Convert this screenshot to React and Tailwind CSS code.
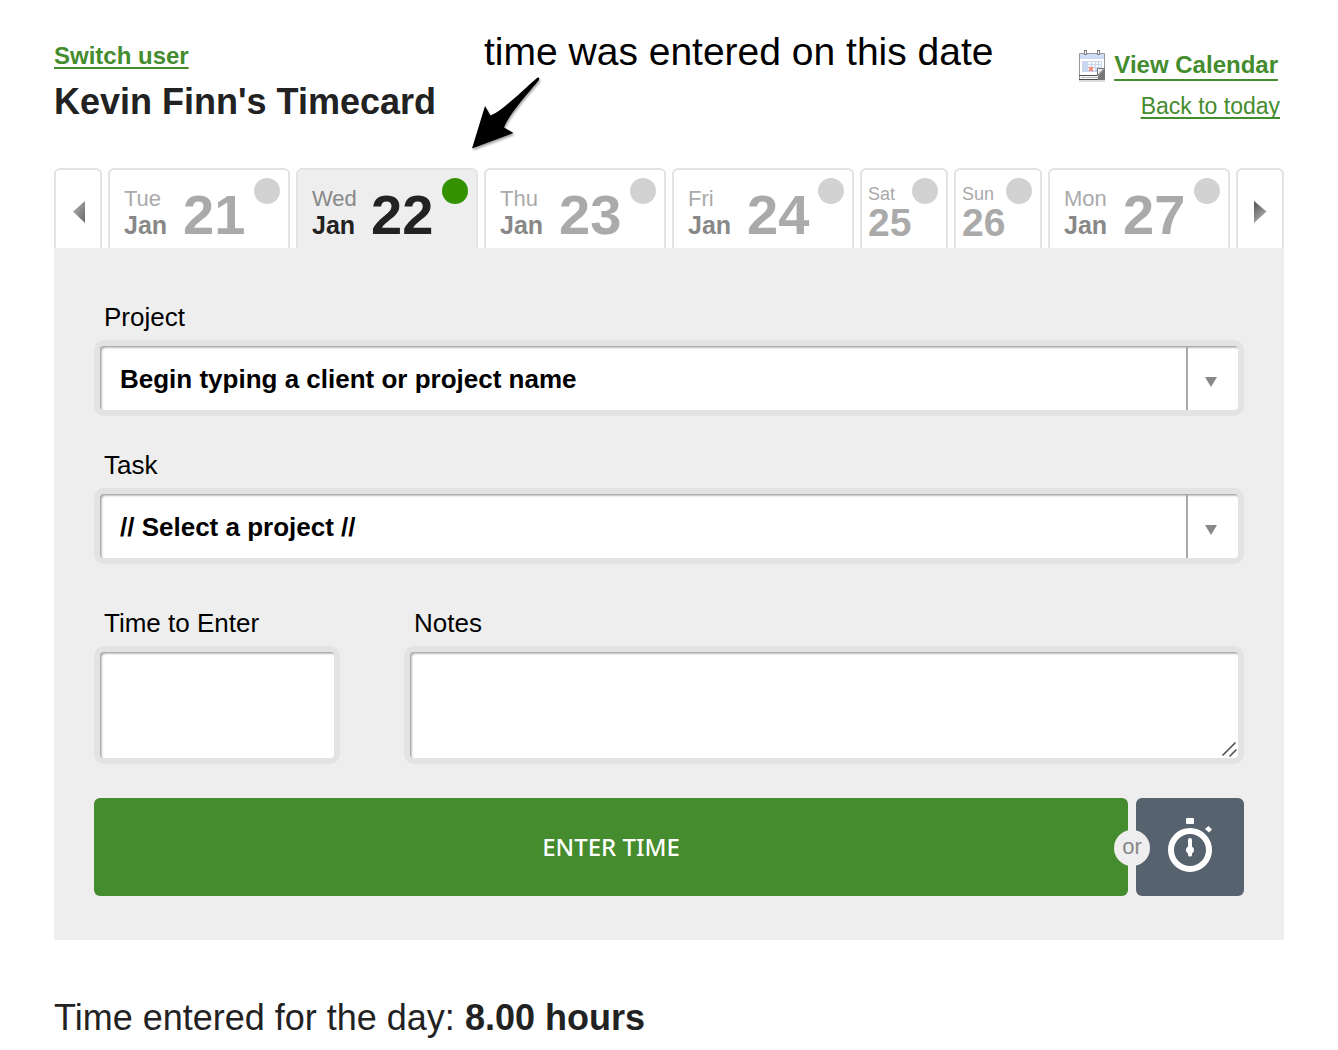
const days = [
  { id: 'tue', name: 'Tue', month: 'Jan', date: '21' },
  { id: 'wed', name: 'Wed', month: 'Jan', date: '22', active: true },
  { id: 'thu', name: 'Thu', month: 'Jan', date: '23' },
  { id: 'fri', name: 'Fri', month: 'Jan', date: '24' },
  { id: 'sat', name: 'Sat', date: '25', weekend: true },
  { id: 'sun', name: 'Sun', date: '26', weekend: true },
  { id: 'mon', name: 'Mon', month: 'Jan', date: '27' },
];

const labelText = 'mb-1.5 block pl-2.5 leading-[34px]';
const fieldBox =
  'relative flex rounded-[10px] border-6 border-[#e3e3e3] bg-[#e3e3e3]';
const fieldInner =
  'flex w-full rounded-[4px] bg-white shadow-[inset_1px_1px_1px_#aaa,inset_2px_2px_2px_#c4c4c4]';

function CalendarIcon() {
  return (
    <svg width="28" height="32" viewBox="0 0 28 32" aria-hidden="true">
      <rect x="1" y="30" width="26" height="2" fill="#dcdcdc" />
      <rect x="1" y="3" width="26" height="27" fill="#fff" />
      <path d="M1.500 30V3.500h25V30" fill="none" stroke="#9a9a9a" />
      <rect x="2" y="4" width="24" height="5" fill="#cfdcf5" />
      <path d="M1 25.500h19M1 29.500h26" stroke="#4c4c4c" />
      <path d="M3 27.500h18" stroke="#b5b5b5" />
      <rect x="4" y="11" width="20" height="11" fill="#c9d6ef" />
      <path
        d="M10 12h3v2h-3zM14 12h3v2h-3zM18 12h2v2h-2zM21 12h2v2h-2zM10 15h3v2h-3zM14 15h3v2h-3zM18 15h2v2h-2zM21 15h2v2h-2zM10 18h3v3h-3zM14 18h3v3h-3z"
        fill="#f7f9ff"
      />
      <path d="M11 17l4 4M15 17l-4 4" stroke="#f0765c" strokeWidth="1.500" />
      <path d="M20 26l7-8v12h-7z" fill="#777" />
      <path d="M19.500 25.500v-7h6.500z" fill="#eee" stroke="#777" />
      <rect x="6.500" y="0.500" width="2" height="4" fill="#fff" stroke="#7d7d7d" />
      <rect x="19.500" y="0.500" width="2" height="4" fill="#fff" stroke="#7d7d7d" />
    </svg>
  );
}

function ArrowAnnotation() {
  return (
    <svg
      className="absolute top-10 -left-3 drop-shadow-[1px_2px_1px_rgba(0,0,0,0.35)]"
      width="70"
      height="76"
      viewBox="0 0 70 76"
      aria-hidden="true"
    >
      <path d="M65.500 1.500Q68 1 67 4C58 15 37 38 32 51.500L41.500 57L0 72.500L13 30L18.500 39.500C32 34 54 11 65.500 1.500Z" />
    </svg>
  );
}

function Triangle({ direction }) {
  const left = direction === 'left';
  return (
    <svg width="13" height="24" viewBox="0 0 13 24" aria-hidden="true">
      <defs>
        <linearGradient id={`shade-${direction}`} x1="0" y1="0" x2={left ? '1' : '0.5'} y2="1">
          <stop offset="0" stopColor={left ? '#b8b8b8' : '#4d4d4d'} />
          <stop offset="1" stopColor={left ? '#666' : '#b0b0b0'} />
        </linearGradient>
      </defs>
      <path
        d={left ? 'M13 1v22L1 11.500z' : 'M0 1v22L12.500 11.500z'}
        fill={`url(#shade-${direction})`}
      />
    </svg>
  );
}

function StopwatchIcon() {
  return (
    <svg className="mb-1" width="46" height="56" viewBox="0 0 46 56" fill="#fff" aria-hidden="true">
      <rect x="19" y="1" width="8" height="6" rx="1" />
      <circle cx="23" cy="33" r="19" fill="none" stroke="#fff" strokeWidth="6" />
      <path d="M21 22.500a2 1.500 0 0 1 4 0V29.500a4 4 0 0 1 0 7V38a2 1.500 0 0 1-4 0V36.500a4 4 0 0 1 0-7z" />
      <path d="M41.500 9l3.500 3.500-3 3-4-3.500z" />
    </svg>
  );
}

function DayTab({ day }) {
  const dayColor = day.active ? 'text-[#888]' : 'text-[#aaa]';
  return (
    <button
      type="button"
      aria-pressed={Boolean(day.active)}
      className={`relative flex h-20 rounded-t-md border-2 border-b-0 border-[#e3e3e3] text-left ${
        day.active ? 'bg-[#eee]' : 'bg-white'
      } ${day.weekend ? 'flex-col px-1.5 pt-3' : 'items-start gap-[15px] pt-[17px] pl-3.5'}`}
    >
      {day.weekend ? (
        <>
          <span className="text-[18px] leading-6 text-[#aaa]">{day.name}</span>
          <span className="text-[39px] leading-[34px] font-bold text-[#aaa]">{day.date}</span>
        </>
      ) : (
        <>
          <span className="flex w-11 flex-col">
            <span className={`text-[22px] leading-6 ${dayColor}`}>{day.name}</span>
            <span className={`text-[25px] leading-7 font-bold ${day.active ? 'text-[#222]' : 'text-[#888]'}`}>
              {day.month}
            </span>
          </span>
          <span className={`text-[56px] leading-14 font-bold ${day.active ? 'text-[#222]' : 'text-[#aaa]'}`}>
            {day.date}
          </span>
        </>
      )}
      <span
        className={`absolute top-2 right-2 size-[26px] rounded-full ${day.active ? 'bg-[#349200]' : 'bg-[#d2d2d2]'}`}
      />
    </button>
  );
}

function DownArrow() {
  return (
    <svg width="12" height="10" viewBox="0 0 12 10" aria-hidden="true">
      <path d="M0 0h12L6 10z" fill="#888" />
    </svg>
  );
}

export default function App() {
  return (
    <main className="min-h-screen bg-white px-[54px] pt-9 font-['Liberation_Sans',Arial,sans-serif] text-[#222]">
      <header className="flex h-[132px] items-start justify-between">
        <div className="flex items-start gap-12">
          <div className="pt-1.5">
            <a
              href="#switch"
              className="block text-[24px] leading-7 font-bold text-[#448c2d] underline decoration-2 underline-offset-3 [text-decoration-skip-ink:none]"
            >
              Switch user
            </a>
            <h1 className="pt-2.5 text-[36px] leading-11 font-bold whitespace-nowrap">Kevin Finn's Timecard</h1>
          </div>
          <p className="relative text-[39px] leading-8 whitespace-nowrap text-black">
            time was entered on this date
            <ArrowAnnotation />
          </p>
        </div>
        <nav className="flex flex-col items-end pt-3.5 text-[#448c2d]">
          <div className="flex items-center gap-2 pr-1.5">
            <CalendarIcon />
            <a
              href="#calendar"
              className="border-b-2 border-[#448c2d] text-[24px] leading-7 font-bold whitespace-nowrap"
            >
              View Calendar
            </a>
          </div>
          <a
            href="#today"
            className="pt-2.5 pr-1 text-[23px] leading-7 whitespace-nowrap underline decoration-2 underline-offset-3 [text-decoration-skip-ink:none]"
          >
            Back to today
          </a>
        </nav>
      </header>

      <div className="grid grid-cols-[48px_182fr_182fr_182fr_182fr_88fr_88fr_182fr_48px] gap-1.5">
        <button
          type="button"
          aria-label="Previous days"
          className="flex h-20 items-center justify-center rounded-t-md border-2 border-b-0 border-[#e3e3e3] pt-1.5"
        >
          <Triangle direction="left" />
        </button>
        {days.map((day) => (
          <DayTab key={day.id} day={day} />
        ))}
        <button
          type="button"
          aria-label="Next days"
          className="flex h-20 items-center justify-center rounded-t-md border-2 border-b-0 border-[#e3e3e3] pt-1.5"
        >
          <Triangle direction="right" />
        </button>
      </div>

      <form className="bg-[#eee] px-10 pt-[52px] pb-11 text-[26px] text-black" onSubmit={(e) => e.preventDefault()}>
        <label htmlFor="project" className={labelText}>
          Project
        </label>
        <div className={fieldBox}>
          <div className={fieldInner}>
            <input
              id="project"
              type="text"
              placeholder="Begin typing a client or project name"
              className="h-16 min-w-0 flex-1 bg-transparent pt-0.5 pl-5 font-bold placeholder:text-black placeholder:opacity-100"
            />
            <button
              type="button"
              aria-label="Show projects"
              className="flex w-[52px] items-center border-l-2 border-[#aaa] pt-2 pl-[17px]"
            >
              <DownArrow />
            </button>
          </div>
        </div>

        <label htmlFor="task" className={`${labelText} mt-8`}>
          Task
        </label>
        <div className={fieldBox}>
          <div className={fieldInner}>
            <select id="task" className="h-16 w-full appearance-none bg-transparent pt-0.5 pl-5 font-bold">
              <option>// Select a project //</option>
            </select>
          </div>
          <span className="pointer-events-none absolute inset-y-0 right-0 flex w-[52px] items-center border-l-2 border-[#aaa] pt-2 pl-[17px]">
            <DownArrow />
          </span>
        </div>

        <div className="mt-[42px] grid grid-cols-[246px_1fr] gap-16">
          <div>
            <label htmlFor="time" className={labelText}>
              Time to Enter
            </label>
            <div className={fieldBox}>
              <input id="time" type="text" className={`${fieldInner} h-[106px] min-w-0 px-4`} />
            </div>
          </div>
          <div>
            <label htmlFor="notes" className={labelText}>
              Notes
            </label>
            <div className={fieldBox}>
              <textarea id="notes" className={`${fieldInner} h-[106px] resize-none px-4 py-3`} />
              <svg
                className="pointer-events-none absolute right-px bottom-px"
                width="15"
                height="15"
                viewBox="0 0 15 15"
                stroke="#555"
                strokeWidth="1.700"
                strokeLinecap="round"
                aria-hidden="true"
              >
                <path d="M1 13L13 1M8 14l6-6" />
              </svg>
            </div>
          </div>
        </div>

        <div className="relative mt-[34px] flex gap-2">
          <button
            type="submit"
            className="h-[98px] flex-1 rounded-md bg-[#448c2d] font-['Noto_Sans',sans-serif] text-[24px] font-medium text-white"
          >
            ENTER TIME
          </button>
          <button
            type="button"
            aria-label="Start timer"
            className="flex w-[108px] items-center justify-center rounded-md bg-[#56626d]"
          >
            <StopwatchIcon />
          </button>
          <span className="absolute top-8 right-[94px] size-9 rounded-full bg-[#eee] text-center text-[22px] leading-[34px] text-[#888]">
            or
          </span>
        </div>
      </form>

      <p className="pt-[58px] text-[36px] leading-10">
        Time entered for the day: <strong>8.00 hours</strong>
      </p>
    </main>
  );
}
